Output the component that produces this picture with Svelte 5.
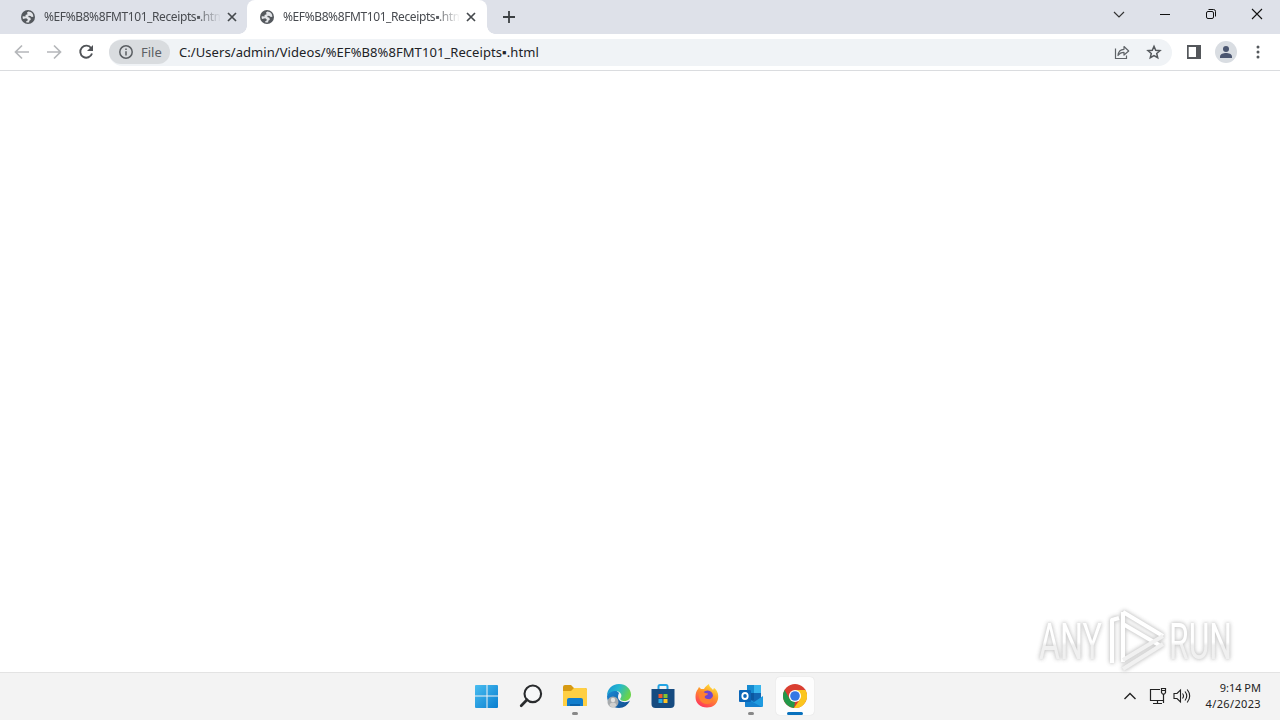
<script lang="ts">
  const title = '%EF%B8%8FMT101_Receipts▪.html';
  const address = 'C:/Users/admin/Videos/%EF%B8%8FMT101_Receipts▪.html';

  let activeTab = $state(1);
  const tabs = [{ id: 0, title }, { id: 1, title }];

  const apps = [
    { name: 'start', state: '' },
    { name: 'search', state: '' },
    { name: 'explorer', state: 'open' },
    { name: 'edge', state: '' },
    { name: 'store', state: '' },
    { name: 'firefox', state: '' },
    { name: 'outlook', state: 'open' },
    { name: 'chrome', state: 'focused' }
  ];
</script>

<div class="desktop">
  <div class="tabstrip">
    {#each tabs as tab}
      <div class="tab" class:active={tab.id === activeTab} onclick={() => activeTab = tab.id} role="tab" tabindex="0" onkeydown={() => {}}>
        <svg class="globe" width="14" height="14" viewBox="0 0 14 14">
          <circle cx="7" cy="7" r="7" fill="#54585d" />
          <path d="M7.400 1.500L6 2.500 6.600 4.300 4.500 5 4.600 6.500 1.700 6.200A5.500 5.500 0 0 0 2 9l3.200-.7 1.600 1.200-.5 1.500-1.400.4.3.8c1 .4 2 .4 3 .1l.1-1.600 1.500-1-.4-2L7.200 7l.6-1.300 1.700.2 1.200 1.200 1.700-.3A5.500 5.500 0 0 0 7.400 1.500z" fill="#e2e4e8" />
        </svg>
        <span class="tab-title">{tab.title}</span>
        <svg class="close" width="10" height="10" viewBox="0 0 10 10"><path d="M1 1l8 8M9 1L1 9" stroke="#45494d" stroke-width="1.7" /></svg>
      </div>
    {/each}
    <svg class="new-tab" width="12" height="12" viewBox="0 0 12 12"><path d="M6 0v12M0 6h12" stroke="#3c4043" stroke-width="1.8" /></svg>
    <div class="window-buttons">
      <svg width="46" height="28" viewBox="0 0 46 28"><path d="M18 12l5 5 5-5" fill="none" stroke="#333" stroke-width="1.2" /></svg>
      <svg width="46" height="28" viewBox="0 0 46 28"><path d="M18 14.500h10" stroke="#111" /></svg>
      <svg width="46" height="28" viewBox="0 0 46 28"><g fill="none" stroke="#111"><rect x="18.500" y="11.500" width="7" height="7" rx="1.500" /><path d="M20.500 9.500h5a2 2 0 0 1 2 2v5" /></g></svg>
      <svg width="46" height="28" viewBox="0 0 46 28"><path d="M18 9l10 10M28 9L18 19" stroke="#111" stroke-width="1.100" /></svg>
    </div>
  </div>

  <div class="toolbar">
    <svg class="nav" width="16" height="16" viewBox="0 0 16 16"><path d="M15 8H2M8 1.500L1.500 8 8 14.500" fill="none" stroke="#b5b7ba" stroke-width="1.700" /></svg>
    <svg class="nav" width="16" height="16" viewBox="0 0 16 16"><path d="M1 8h13M8 1.500L14.500 8 8 14.500" fill="none" stroke="#b5b7ba" stroke-width="1.700" /></svg>
    <svg class="nav" width="16" height="16" viewBox="0 0 16 16"><path d="M13.200 4.200A6 6 0 1 0 14 9.500" fill="none" stroke="#505357" stroke-width="1.900" /><path d="M15 1v6H9z" fill="#505357" /></svg>
    <div class="omnibox">
      <div class="chip">
        <svg width="14" height="14" viewBox="0 0 14 14"><circle cx="7" cy="7" r="6.200" fill="none" stroke="#5a5e62" stroke-width="1.500" /><path d="M7 6.200v4.200M7 3.500v1.600" stroke="#5a5e62" stroke-width="1.500" /></svg>
        <span>File</span>
      </div>
      <span class="address">{address}</span>
      <svg class="share" width="16" height="16" viewBox="0 0 16 16"><path d="M1.500 4.500v10h11v-3" fill="none" stroke="#5f6368" stroke-width="1.200" /><path d="M4 11.500c.3-4 2.500-6 6-6.200V2.500L14.700 7 10 11V8.300C7.500 8.300 5.500 9.200 4 11.500z" fill="none" stroke="#5f6368" stroke-width="1.200" stroke-linejoin="round" /></svg>
      <svg class="star" width="16" height="16" viewBox="0 0 16 16"><path d="M8 2.300l1.700 4 4.300.4-3.300 2.800 1 4.200L8 11.500l-3.700 2.200 1-4.200L2 6.700l4.300-.4z" fill="none" stroke="#54585c" stroke-width="1.500" /></svg>
    </div>
    <svg class="panel" width="14" height="14" viewBox="0 0 14 14"><path d="M0 0h14v14H0zM1.700 2v10H9V2z" fill="#54575b" fill-rule="evenodd" /></svg>
    <svg class="avatar" width="22" height="22" viewBox="0 0 22 22"><circle cx="11" cy="11" r="11" fill="#d9dde2" /><circle cx="11" cy="8" r="3" fill="#4b5670" /><path d="M5 17v-1.500c0-2.500 3.500-3.500 6-3.500s6 1 6 3.500V17z" fill="#4b5670" /></svg>
    <svg class="menu" width="4" height="14" viewBox="0 0 4 14"><g fill="#54585c"><circle cx="2" cy="2" r="1.500" /><circle cx="2" cy="7" r="1.500" /><circle cx="2" cy="12" r="1.500" /></g></svg>
  </div>

  <main></main>

  <div class="taskbar">
    <div class="apps">
      {#each apps as app}
        <div class="app {app.state}">
          <svg width="24" height="24" viewBox="0 0 24 24">
            {#if app.name === 'start'}
              <defs><linearGradient id="win" x2="1" y2="1"><stop stop-color="#49bdf0" /><stop offset="1" stop-color="#087ed0" /></linearGradient></defs>
              <path d="M1 1h10.500v10.500H0V2a1 1 0 0 1 1-1zM12.500 1H22a1 1 0 0 1 1 1v9.500H12.500zM0 12.500h11.500V24H1a1 1 0 0 1-1-1zM12.500 12.500H23V23a1 1 0 0 1-1 1h-9.500z" fill="url(#win)" />
            {:else if app.name === 'search'}
              <circle cx="13.800" cy="9.800" r="8.300" fill="#f6f7f8" stroke="#292b2d" stroke-width="2.100" />
              <path d="M8 15.800L2.200 21.700" stroke="#292b2d" stroke-width="2.700" stroke-linecap="round" />
            {:else if app.name === 'explorer'}
              <path d="M0 3a2 2 0 0 1 2-2h6l3 3h11a2 2 0 0 1 2 2v4H0z" fill="#d79a12" />
              <path d="M0 7h8l3-3h11a2 2 0 0 1 2 2v16H0z" fill="#ffcf43" />
              <path d="M4 22v-6a2 2 0 0 1 2-2h12a2 2 0 0 1 2 2v6z" fill="#117dcc" />
              <path d="M7 20h10v2H7z" fill="#0863ac" />
            {:else if app.name === 'edge'}
              <defs>
                <linearGradient id="edge-top" x2="1" y2=".4"><stop stop-color="#168ed3" /><stop offset=".5" stop-color="#24b8cf" /><stop offset="1" stop-color="#69d34b" /></linearGradient>
                <linearGradient id="edge-low" x2="1" y2="1"><stop stop-color="#1a8bd8" /><stop offset="1" stop-color="#114a8b" /></linearGradient>
              </defs>
              <path d="M0 12C2 5 8 4 12 9c-2 4-1 8 4 9 3 .5 5-.2 7-1.500C21 21 17 24 12 24 5 24 0 19 0 12z" fill="url(#edge-low)" />
              <path d="M0 12C0 5 5 0 12 0c7 0 12 5 12 10.500 0 4-3 6.500-6.500 6.500-3 0-5-1.200-4-2.700C16 11 13 7 9 7 5 7 1 9 0 12z" fill="url(#edge-top)" />
              <circle cx="6" cy="18" r="5.500" fill="#a6aaad" /><circle cx="6" cy="16" r="2.200" fill="#e4e3e1" /><path d="M2.500 21.500c0-4 7-4 7 0-2 2.300-5 2.300-7 0z" fill="#d1d0ce" />
            {:else if app.name === 'store'}
              <path d="M7.500 6V2.500A1.500 1.500 0 0 1 9 1h6a1.500 1.500 0 0 1 1.500 1.500V6" fill="none" stroke="#24a4e4" stroke-width="2" />
              <path d="M.5 5h23v15a4 4 0 0 1-4 4h-15a4 4 0 0 1-4-4z" fill="#164b80" />
              <path d="M7.500 10h4v4h-4z" fill="#f15a2b" /><path d="M12.500 10h4v4h-4z" fill="#84c32f" /><path d="M7.500 15h4v4h-4z" fill="#28ace6" /><path d="M12.500 15h4v4h-4z" fill="#ffc323" />
            {:else if app.name === 'firefox'}
              <defs><linearGradient id="fox" x1=".8" x2=".25" y2="1"><stop stop-color="#fff044" /><stop offset=".4" stop-color="#ff9b25" /><stop offset="1" stop-color="#ff315f" /></linearGradient></defs>
              <path d="M3 5l1-2 2 2 3 0c1-2 3-4 5-5 0 3 3 4 4 6l1-2c3 2 5 6 4 11-1 5-5 8.500-11 8.500C5 23.500.5 19 .5 13c0-3 .5-6 2.500-8z" fill="url(#fox)" />
              <circle cx="12.500" cy="12" r="5.500" fill="#7045cf" />
              <path d="M4 8c3-2 5 0 6 1l3 .5c0 1.500-2 1.500-3 2.500-1 2 1 3 3 3 2 .5 4-.5 5-3 .5 5-2 8-6 8-6 0-9-5-8-12z" fill="#ff8130" />
            {:else if app.name === 'outlook'}
              <path d="M8 1h14v18H8z" fill="#1267b4" /><path d="M15 1h7v8h-7z" fill="#38b5ed" /><path d="M8 1h7v8H8z" fill="#168bd1" /><path d="M8 9h7v7H8z" fill="#0c58a0" />
              <path d="M6 13l9 5 9-6v10a1 1 0 0 1-1 1H7a1 1 0 0 1-1-1z" fill="#1f9be0" /><path d="M6 14l17 9H7a1 1 0 0 1-1-1z" fill="#1480ce" />
              <rect y="6" width="12" height="12" rx="1" fill="#0b66b8" /><ellipse cx="6" cy="12" rx="2.700" ry="3" fill="none" stroke="#fff" stroke-width="1.800" />
            {:else}
              <circle cx="12" cy="12" r="12" fill="#d93e30" />
              <path d="M1.600 6L6.800 15 12 18l-1 6A12 12 0 0 1 1.600 6z" fill="#229849" />
              <path d="M12 6h10.400A12 12 0 0 1 11 24l6.200-9z" fill="#fbc51d" />
              <circle cx="12" cy="12" r="6.100" fill="#fff" /><circle cx="12" cy="12" r="4.800" fill="#3478e5" />
            {/if}
          </svg>
        </div>
      {/each}
    </div>
    <div class="tray">
      <svg width="12" height="8" viewBox="0 0 12 8"><path d="M.5 7L6 1.500 11.500 7" fill="none" stroke="#222" stroke-width="1.400" /></svg>
      <svg width="18" height="18" viewBox="0 0 18 18"><g fill="none" stroke="#222" stroke-width="1.200"><path d="M11 2.500H1.500v11h13M8.500 13.500v3M4 16.500h9" /><path d="M12.500 1.500h4v4l-1 1.500h-2l-1-1.500zM12.500 3.500h4M14.500 7v9" /></g></svg>
      <svg width="18" height="16" viewBox="0 0 18 16"><g fill="none" stroke="#222" stroke-width="1.100"><path d="M1 5.500h3L7.500 2v12L4 10.500H1z" /><path d="M9.500 5.500q2 2.500 0 5M12 3.500q3.500 4.500 0 9M14.200 1.500q5 6.500 0 13" /></g></svg>
      <div class="clock"><span>9:14 PM</span><span class="date">4/26/2023</span></div>
    </div>
  </div>

  <svg class="watermark" width="220" height="80" viewBox="0 0 220 80">
    <defs><linearGradient id="mark" x2="0" y2="1"><stop offset=".5" stop-color="#fff" /><stop offset=".56" stop-color="#f0f0f0" /></linearGradient></defs>
    <text x="9" y="59" textLength="63" lengthAdjust="spacingAndGlyphs">ANY</text>
    <g fill="none" stroke="#fff" stroke-width="4" stroke-linejoin="round">
      <path d="M93 12v50M93 12l40 24" />
      <path d="M93 24l36 21M89 18l-7 2v43" />
      <path d="M133 36L93 60M133 44L93 69" stroke="#f1f1f1" />
    </g>
    <text x="139" y="59" textLength="63" lengthAdjust="spacingAndGlyphs">RUN</text>
  </svg>
</div>

<style>
  :global(body) { margin: 0; overflow: hidden; }
  .desktop { width: 1280px; height: 720px; display: flex; flex-direction: column; background: #fff; font-family: "Noto Sans", sans-serif; position: relative; }
  svg { display: block; flex-shrink: 0; }

  .tabstrip { height: 34px; display: flex; align-items: center; background: #dee1e9; }
  .tab { box-sizing: border-box; width: 240px; height: 34px; display: flex; align-items: center; padding-left: 13px; color: #484b50; }
  .tab:first-child { width: 247px; padding-left: 21px; }
  .tab.active { background: #fff; border-radius: 8px 8px 0 0; position: relative; }
  .tab.active::before, .tab.active::after { content: ""; position: absolute; bottom: 0; width: 8px; height: 8px; }
  .tab.active::before { left: -8px; background: radial-gradient(circle at 0 0, transparent 7.5px, #fff 8px); }
  .tab.active::after { right: -8px; background: radial-gradient(circle at 100% 0, transparent 7.5px, #fff 8px); }
  .tab-title {
    width: 177px; margin-left: 9px; font-size: 12px; line-height: 17px; letter-spacing: -0.4px; white-space: nowrap; overflow: hidden;
    margin-top: -1px; mask-image: linear-gradient(90deg, #000 152px, transparent 177px);
  }
  .close { margin-left: 6px; }
  .new-tab { margin-left: 16px; }
  .window-buttons { display: flex; margin-left: auto; align-self: flex-start; }

  .toolbar { height: 36px; display: flex; align-items: center; border-bottom: 1px solid #dadcdf; padding-left: 14px; }
  .nav { margin-right: 16px; }
  .omnibox { width: 1063px; height: 27px; margin-left: -1px; border-radius: 14px; background: #f0f3f6; display: flex; align-items: center; font-size: 13px; }
  .chip { box-sizing: border-box; width: 61px; height: 24px; border-radius: 12px; background: #d9dcdf; color: #5b5f64; display: flex; align-items: center; gap: 8px; padding-left: 10px; }
  .address { color: #202226; margin-left: 9px; white-space: nowrap; letter-spacing: 0.07px; }
  .share { margin-left: auto; }
  .star { margin: 0 10px 0 16px; }
  .panel { margin-left: 15px; }
  .avatar { margin-left: 14px; }
  .menu { margin-left: 19px; }

  main { flex: 1; }

  .taskbar { box-sizing: border-box; height: 48px; padding-bottom: 1px; display: flex; justify-content: space-between; border-top: 1px solid #e3e3e3; background: #f3f3f3; }
  .apps { display: flex; margin-left: 465px; align-items: center; }
  .app { box-sizing: border-box; width: 38px; height: 38px; margin: 0 3px; border-radius: 4px; display: flex; align-items: center; justify-content: center; position: relative; }
  .app.focused { background: #fdfdfd; box-shadow: 0 0 1px #ccc; }
  .app.open::after, .app.focused::after { content: ""; position: absolute; bottom: 0; width: 6px; height: 3px; border-radius: 2px; background: #888; }
  .app.focused::after { width: 16px; background: #0871bd; }
  .tray { display: flex; align-items: center; padding-right: 19px; }
  .tray svg:nth-child(2) { margin-left: 13px; }
  .tray svg:nth-child(3) { margin-left: 6px; }
  .clock { width: 70px; display: flex; flex-direction: column; align-items: flex-end; color: #222; font-size: 11px; line-height: 16px; }
  .date { letter-spacing: 0.35px; }

  .watermark { position: absolute; left: 1030px; top: 600px; filter: drop-shadow(0 0 2px #c8c8c8) drop-shadow(0 0 1px #ddd); }
  .watermark text { font: 400 50px Roboto, sans-serif; fill: url(#mark); }
</style>
